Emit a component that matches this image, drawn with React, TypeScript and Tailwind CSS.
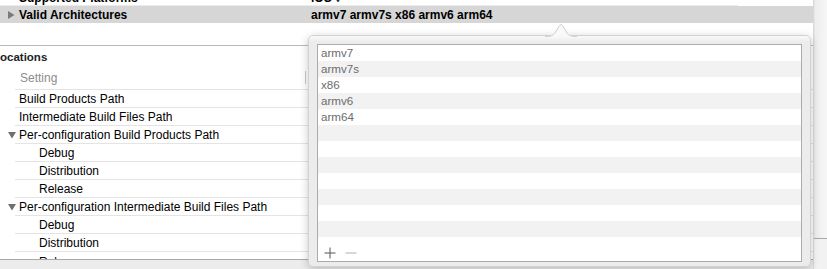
import * as React from "react";

const archs = ["armv7", "armv7s", "x86", "armv6", "arm64"];

const Disclosure = ({ open }: { open?: boolean }) => (
  <svg width="8" height="8" viewBox="0 0 8 8" className="shrink-0">
    {open ? <path d="M0 1 L8 1 L4 7.5 Z" fill="#6f6f6f" /> : <path d="M1 0 L7.5 4 L1 8 Z" fill="#7a7a7a" />}
  </svg>
);

const Row = ({ children, indent = 0, disclosure }: { children: React.ReactNode; indent?: number; disclosure?: boolean }) => (
  <div className="ml-[15px] flex h-[18px] items-center border-b border-[#e4e4e4] pt-[1px]">
    <div className="flex items-center" style={{ paddingLeft: disclosure ? 0 : 4 + indent }}>
      {disclosure && (
        <span className="-ml-[7px] mr-[3px] flex w-[8px] justify-center">
          <Disclosure open />
        </span>
      )}
      <span>{children}</span>
    </div>
  </div>
);

function Popover() {
  return (
    <div className="absolute left-[308px] top-[35px] flex h-[232px] w-[503px] flex-col rounded-[5px] border border-[#d2d2d2] bg-gradient-to-b from-[#f9f9f9] to-[#ececec] to-[6px] px-[8px] pb-[4px] pt-[8px] shadow-[0_2px_8px_rgba(0,0,0,0.22)]">
      <svg width="32" height="14" viewBox="0 0 32 14" className="absolute -top-[13px] left-[236px]">
        <path d="M0 13.5 C6 13.5 8 12.5 10 10 L14.5 2.5 Q16 0.5 17.5 2.5 L22 10 C24 12.5 26 13.5 32 13.5 Z" fill="#f9f9f9" />
        <path d="M0 13.5 C6 13.5 8 12.5 10 10 L14.5 2.5 Q16 0.5 17.5 2.5 L22 10 C24 12.5 26 13.5 32 13.5" fill="none" stroke="#cfcfcf" strokeWidth="1" />
      </svg>
      <div className="flex flex-1 flex-col overflow-hidden border border-[#ababab] bg-white">
        {Array.from({ length: 12 }).map((_, i) => (
          <div
            key={i}
            className={`flex h-[16px] shrink-0 items-center pl-[3px] text-[11.6px] text-[#6b6b6b] ${i % 2 === 1 ? "bg-[#f2f2f2]" : "bg-white"}`}
          >
            {archs[i] ?? ""}
          </div>
        ))}
        <div className="flex flex-1 items-end gap-[9px] pb-[2px] pl-[6px]">
          <svg width="12" height="12" viewBox="0 0 12 12">
            <path d="M6 0.5 V11.5 M0.5 6 H11.5" stroke="#555" strokeWidth="1" />
          </svg>
          <svg width="12" height="12" viewBox="0 0 12 12">
            <path d="M0.5 6 H11.5" stroke="#b0b0b0" strokeWidth="1" />
          </svg>
        </div>
      </div>
    </div>
  );
}

export default function App() {
  return (
    <div className="relative flex h-[269px] w-[827px] overflow-hidden bg-white text-[12px] text-black [font-family:'Liberation_Sans',Arial,sans-serif]">
      <div className="flex w-[813px] flex-col">
        <div className="mr-[75px] h-[6px] overflow-hidden border-b border-[#ebebeb]">
          <div className="-mt-[9px] flex h-[14px] items-center font-bold">
            <span className="w-[311px] pl-[19px]">Supported Platforms</span>
            <span>iOS ◊</span>
          </div>
        </div>
        <div className="flex h-[17px] items-center bg-[#d6d6d6] font-bold">
          <span className="flex w-[19px] justify-center pl-[2px]">
            <Disclosure />
          </span>
          <span className="w-[292px]">Valid Architectures</span>
          <span>armv7 armv7s x86 armv6 arm64</span>
        </div>
        <div className="h-[22px]" />
        <div className="flex flex-1 flex-col border-t border-[#b9b9b9]">
          <div className="h-[26px] pt-[4px] text-[11.5px] font-bold leading-[14px] text-[#222]">ocations</div>
          <div className="ml-[15px] flex h-[18px] items-center border-b border-[#e4e4e4] pb-[6px]">
            <span className="w-[290px] pl-[5px] text-[#8d8d8d]">Setting</span>
            <span className="h-[13px] w-px bg-[#c8c8c8]" />
          </div>
          <Row>Build Products Path</Row>
          <Row>Intermediate Build Files Path</Row>
          <Row disclosure>Per-configuration Build Products Path</Row>
          <Row indent={20}>Debug</Row>
          <Row indent={20}>Distribution</Row>
          <Row indent={20}>Release</Row>
          <Row disclosure>Per-configuration Intermediate Build Files Path</Row>
          <Row indent={20}>Debug</Row>
          <Row indent={20}>Distribution</Row>
          <div className="ml-[15px] h-[7px] overflow-hidden">
            <div className="flex h-[18px] items-center pl-[24px] pt-[2px]">Release</div>
          </div>
          <div className="flex-1 border-t border-[#a9a9a9] bg-[#ececec]" />
        </div>
      </div>
      <div className="flex w-[14px] flex-col border-l border-[#d9d9d9] bg-gradient-to-r from-[#ececec] to-[#f7f7f7]">
        <div className="h-[238px] border-l border-[#e6e6e6]" />
        <div className="flex-1 border-t border-[#a9a9a9] bg-[#f2f2f2]" />
      </div>
      <Popover />
    </div>
  );
}
